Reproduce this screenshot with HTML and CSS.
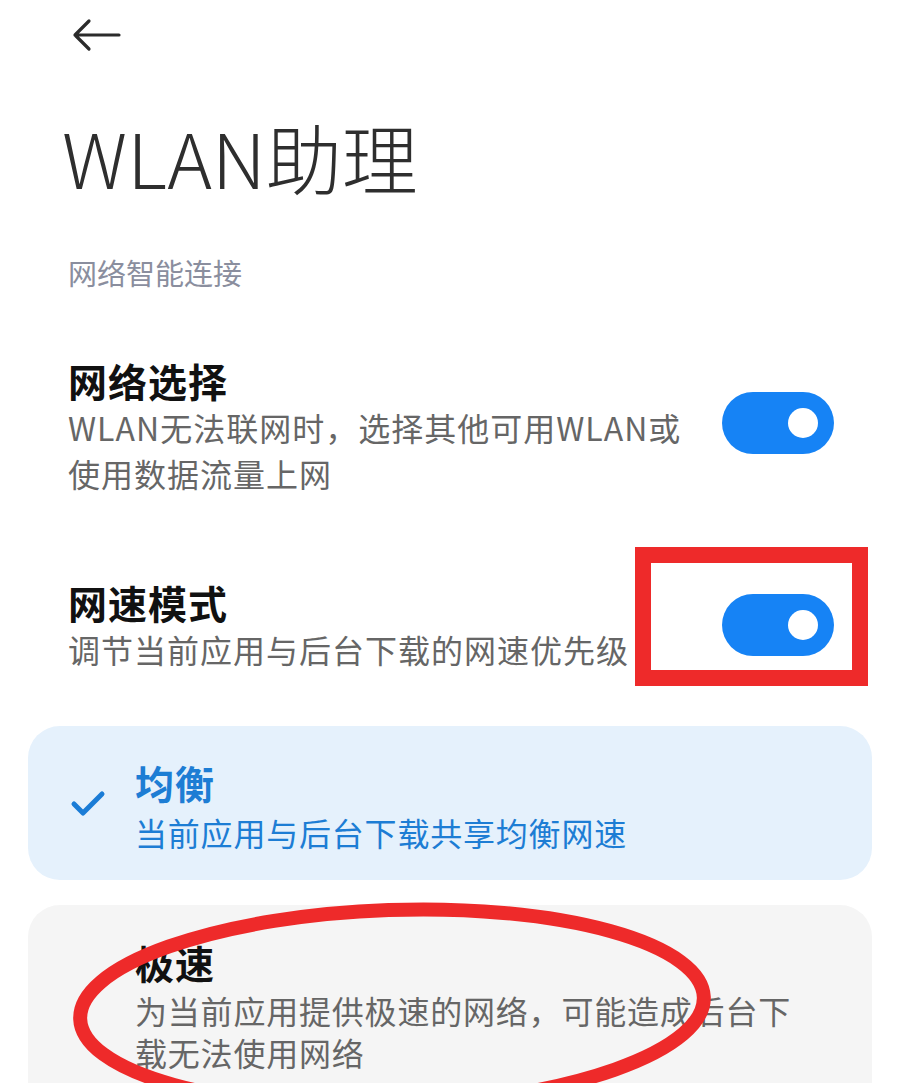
FILE: index.html
```html
<!DOCTYPE html>
<html lang="zh-CN">
<head>
    <meta charset="UTF-8">
    <meta name="viewport" content="width=device-width, initial-scale=1.0">
    <title>WLAN助理</title>
    <link rel="stylesheet" href="styles.css">
</head>
<body>
    <div class="page">
        <!-- Top bar -->
        <div class="topbar">
            <svg class="back" width="52" height="34" viewBox="0 0 52 34">
                <path d="M49 17H5M19 3L5 17L19 31" fill="none" stroke="#2b2b2b" stroke-width="3.2" stroke-linecap="round" stroke-linejoin="round"/>
            </svg>
        </div>

        <h1 class="title">WLAN助理</h1>

        <div class="section-label">网络智能连接</div>

        <!-- Settings rows -->
        <div class="row row-first">
            <div class="row-text">
                <div class="row-title">网络选择</div>
                <div class="row-desc">WLAN无法联网时，选择其他可用WLAN或<br>使用数据流量上网</div>
            </div>
            <div class="toggle toggle-first"><span class="knob"></span></div>
        </div>

        <div class="row row-second">
            <div class="row-text">
                <div class="row-title">网速模式</div>
                <div class="row-desc">调节当前应用与后台下载的网速优先级</div>
            </div>
            <div class="toggle"><span class="knob"></span></div>
        </div>

        <!-- Mode options -->
        <div class="option option-selected">
            <svg class="check" width="36" height="28" viewBox="0 0 36 28">
                <path d="M4 14L13 23L32 4" fill="none" stroke="#1a7cd6" stroke-width="5" stroke-linecap="round" stroke-linejoin="round"/>
            </svg>
            <div class="option-text">
                <div class="option-title">均衡</div>
                <div class="option-desc">当前应用与后台下载共享均衡网速</div>
            </div>
        </div>

        <div class="option option-plain">
            <div class="option-text">
                <div class="option-title">极速</div>
                <div class="option-desc">为当前应用提供极速的网络，可能造成后台下<br>载无法使用网络</div>
            </div>
        </div>

        <!-- Annotations drawn over the screenshot -->
        <div class="mark-box"></div>
        <svg class="mark-ring" width="900" height="1083" viewBox="0 0 900 1083">
            <ellipse cx="392" cy="1008" rx="312" ry="98" transform="rotate(-2 392 1008)" fill="none" stroke="#ee2a2a" stroke-width="14"/>
        </svg>
    </div>
</body>
</html>
```

FILE: styles.css
```css
:root {
    --blue: #1683f5;
    --blue-text: #1d7dd4;
    --red: #ee2a2a;
    --grey: #666;
}

* {
    box-sizing: border-box;
}

body {
    margin: 0;
    background: #fff;
    font-family: "Noto Sans CJK SC", "Noto Sans", sans-serif;
    color: #111;
}

.page {
    position: relative;
    width: 900px;
    height: 1083px;
    overflow: hidden;
}

.topbar {
    height: 70px;
    padding-left: 70px;
    display: flex;
    align-items: center;
}

.title {
    margin: 41px 0 0 62px;
    font-size: 76px;
    font-weight: 300;
    line-height: 90px;
    color: #2e2e2e;
}

.section-label {
    margin: 51px 0 0 68px;
    font-size: 29px;
    line-height: 40px;
    color: #8a8e9e;
}

.row {
    display: flex;
    align-items: center;
    justify-content: space-between;
    padding: 0 66px 0 68px;
}

.row-first {
    margin-top: 64px;
}

.row-second {
    margin-top: 82px;
}

.row-title {
    font-size: 39px;
    font-weight: 700;
    line-height: 48px;
    letter-spacing: 1px;
}

.row-desc {
    font-size: 32px;
    line-height: 46px;
    color: var(--grey);
    letter-spacing: 1px;
}

.toggle {
    width: 112px;
    height: 62px;
    border-radius: 31px;
    background: var(--blue);
    display: flex;
    align-items: center;
    justify-content: flex-end;
    padding-right: 16px;
    flex-shrink: 0;
}

.toggle-first {
    margin-bottom: 6px;
}

.knob {
    width: 30px;
    height: 30px;
    border-radius: 50%;
    background: #fff;
}

.option {
    margin: 0 28px;
    border-radius: 32px;
    display: flex;
    align-items: center;
    padding-left: 107px;
    position: relative;
}

.option-selected {
    margin-top: 54px;
    background: #e5f1fc;
    padding-top: 32px;
    padding-bottom: 25px;
}

.option-plain {
    margin-top: 25px;
    background: #f5f5f5;
    padding-top: 33px;
    padding-bottom: 40px;
}

.check {
    position: absolute;
    left: 42px;
    top: 64px;
}

.option-title {
    font-size: 39px;
    font-weight: 700;
    line-height: 48px;
    letter-spacing: 1px;
}

.option-selected .option-title,
.option-selected .option-desc {
    color: var(--blue-text);
}

.option-desc {
    margin-top: 3px;
    font-size: 32px;
    line-height: 42px;
    color: var(--grey);
    letter-spacing: 0.8px;
}

.option-selected .option-desc {
    line-height: 46px;
}

.mark-box {
    position: absolute;
    left: 635px;
    top: 547px;
    width: 233px;
    height: 139px;
    border: 16px solid var(--red);
}

.mark-ring {
    position: absolute;
    left: 0;
    top: 0;
    pointer-events: none;
}
```
